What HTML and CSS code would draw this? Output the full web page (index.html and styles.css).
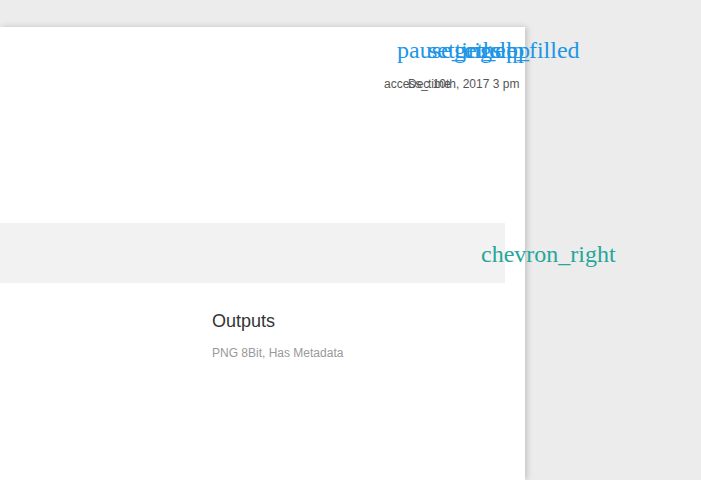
FILE: index.html
```html
<!DOCTYPE html>
<html lang="en">
<head>
    <meta charset="UTF-8">
    <meta name="viewport" content="width=device-width, initial-scale=1.0">
    <title>Job Details</title>
    <link rel="stylesheet" href="styles.css">
</head>
<body>
    <div class="job-card">
        <div class="job-header">
            <div class="job-actions">
                <span class="material-icons action">pause_circle_filled</span>
                <span class="material-icons action action-2">settings</span>
                <span class="material-icons action action-3">get_app</span>
                <span class="material-icons action action-4">help</span>
            </div>
            <div class="job-time">
                <span class="material-icons time-icon">access_time</span>
                <span class="time-text">Dec 10th, 2017 3 pm</span>
            </div>
        </div>

        <div class="job-band">
            <span class="material-icons chevron">chevron_right</span>
        </div>

        <div class="job-outputs">
            <h2>Outputs</h2>
            <p>PNG 8Bit, Has Metadata</p>
        </div>
    </div>
</body>
</html>
```

FILE: styles.css
```css
body {
    margin: 0;
    background-color: #ececec;
    font-family: "Liberation Sans", Arial, sans-serif;
    color: #333;
    min-height: 480px;
    overflow: hidden;
}

.job-card {
    width: 525px;
    min-height: 453px;
    margin-top: 27px;
    background-color: #fff;
    box-shadow: 2px 0 6px rgba(0, 0, 0, 0.18);
}

.material-icons {
    font-family: "Liberation Serif", "Times New Roman", serif;
    font-size: 24px;
    line-height: 28px;
    white-space: nowrap;
}

.job-header {
    padding-top: 9px;
    height: 177px;
}

.job-actions {
    display: grid;
    padding-left: 397px;
    width: 0;
}

.action {
    grid-area: 1 / 1;
    color: #1e96e6;
}

.action-2 {
    margin-left: 31px;
}

.action-3 {
    margin-left: 57px;
}

.action-4 {
    margin-left: 86px;
}

.job-time {
    display: grid;
    margin-top: 13px;
    padding-left: 384px;
    width: 0;
    color: #555;
}

.time-icon,
.time-text {
    grid-area: 1 / 1;
    font-family: "Liberation Sans", Arial, sans-serif;
    font-size: 12px;
    line-height: 14px;
    white-space: nowrap;
}

.time-text {
    margin-left: 24px;
}

.job-band {
    width: 505px;
    height: 60px;
    margin-top: 10px;
    background-color: #f2f2f2;
    display: flex;
    align-items: center;
    padding-left: 481px;
    padding-top: 1px;
    box-sizing: border-box;
}

.chevron {
    color: #26a69a;
}

.job-outputs {
    padding-left: 212px;
    padding-top: 28px;
}

.job-outputs h2 {
    margin: 0;
    font-size: 18px;
    font-weight: normal;
    line-height: 21px;
    color: #333;
}

.job-outputs p {
    margin: 14px 0 0;
    font-size: 12px;
    line-height: 14px;
    color: #999;
}
```
